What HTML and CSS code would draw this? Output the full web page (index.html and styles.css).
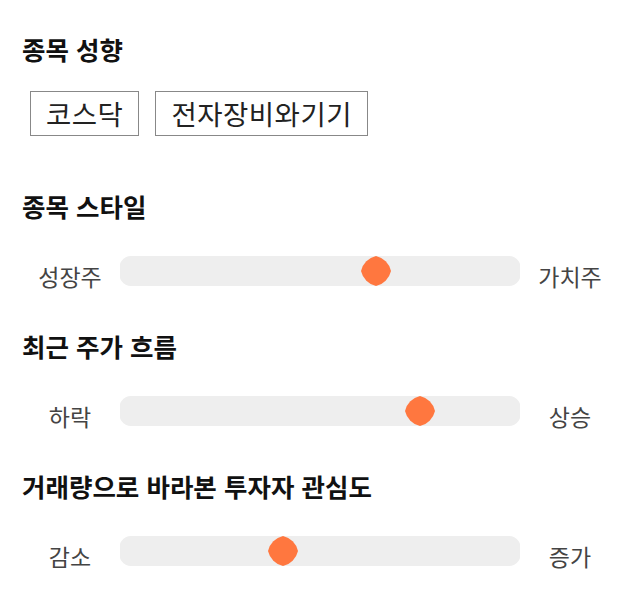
FILE: index.html
```html
<!DOCTYPE html>
<html lang="ko">
<head>
    <meta charset="UTF-8">
    <meta name="viewport" content="width=device-width, initial-scale=1.0">
    <title>종목 분석</title>
    <link rel="stylesheet" href="styles.css">
</head>
<body>
    <div class="section">
        <h2 class="title">종목 성향</h2>
        <div class="tags">
            <span class="tag">코스닥</span>
            <span class="tag">전자장비와기기</span>
        </div>
    </div>

    <div class="section">
        <h2 class="title">종목 스타일</h2>
        <div class="slider-row">
            <span class="label">성장주</span>
            <svg class="track" width="400" height="30" viewBox="0 0 400 30">
                <path class="track-bg" d="M11 0 H389 A11.5 11.5 0 0 1 400 15 A11.5 11.5 0 0 1 389 30 H11 A11.5 11.5 0 0 1 0 15 A11.5 11.5 0 0 1 11 0 Z"/>
                <g transform="translate(256 0)">
                    <path class="thumb" d="M0 0 A20 20 0 0 1 15 15 A20 20 0 0 1 0 30 A20 20 0 0 1 -15 15 A20 20 0 0 1 0 0 Z"/>
                </g>
            </svg>
            <span class="label">가치주</span>
        </div>
    </div>

    <div class="section">
        <h2 class="title">최근 주가 흐름</h2>
        <div class="slider-row">
            <span class="label">하락</span>
            <svg class="track" width="400" height="30" viewBox="0 0 400 30">
                <path class="track-bg" d="M11 0 H389 A11.5 11.5 0 0 1 400 15 A11.5 11.5 0 0 1 389 30 H11 A11.5 11.5 0 0 1 0 15 A11.5 11.5 0 0 1 11 0 Z"/>
                <g transform="translate(300 0)">
                    <path class="thumb" d="M0 0 A20 20 0 0 1 15 15 A20 20 0 0 1 0 30 A20 20 0 0 1 -15 15 A20 20 0 0 1 0 0 Z"/>
                </g>
            </svg>
            <span class="label">상승</span>
        </div>
    </div>

    <div class="section">
        <h2 class="title">거래량으로 바라본 투자자 관심도</h2>
        <div class="slider-row">
            <span class="label">감소</span>
            <svg class="track" width="400" height="30" viewBox="0 0 400 30">
                <path class="track-bg" d="M11 0 H389 A11.5 11.5 0 0 1 400 15 A11.5 11.5 0 0 1 389 30 H11 A11.5 11.5 0 0 1 0 15 A11.5 11.5 0 0 1 11 0 Z"/>
                <g transform="translate(163 0)">
                    <path class="thumb" d="M0 0 A20 20 0 0 1 15 15 A20 20 0 0 1 0 30 A20 20 0 0 1 -15 15 A20 20 0 0 1 0 0 Z"/>
                </g>
            </svg>
            <span class="label">증가</span>
        </div>
    </div>
</body>
</html>
```

FILE: styles.css
```css
body {
    margin: 0;
    padding-top: 35px;
    font-family: "Noto Sans CJK KR", "Noto Sans", sans-serif;
    background: #fff;
    color: #111;
}

.section {
    margin-bottom: 41px;
}

.section:first-child {
    margin-bottom: 56px;
}

.title {
    margin: 0;
    padding: 0 0 4px 22px;
    font-size: 25.5px;
    line-height: 28px;
    font-weight: 700;
    color: #111;
}

.tags {
    display: flex;
    gap: 16px;
    margin-top: 24px;
    padding-left: 30px;
}

.tag {
    border: 1px solid #888;
    padding: 0 15px;
    font-size: 27.5px;
    letter-spacing: 0.5px;
    line-height: 43px;
    color: #222;
}

.slider-row {
    display: flex;
    align-items: flex-start;
    margin-top: 32px;
    padding: 0 20px;
}

.label {
    width: 100px;
    text-align: center;
    font-size: 23px;
    line-height: 30px;
    margin-top: 5px;
    color: #444;
}

.track {
    display: block;
}

.track-bg {
    fill: #eeeeee;
}

.thumb {
    fill: #ff773f;
}
```
